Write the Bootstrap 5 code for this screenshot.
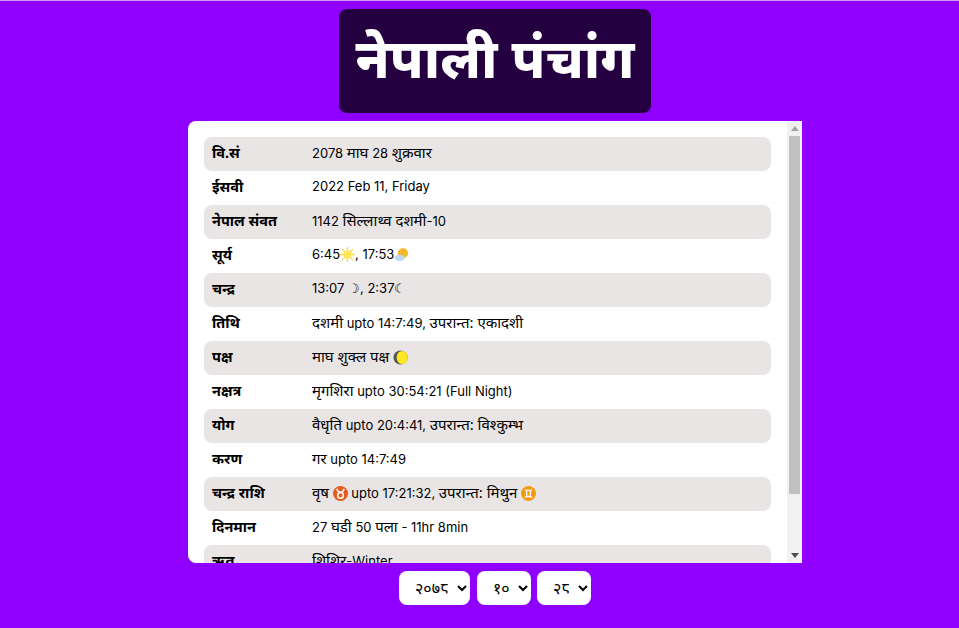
<!DOCTYPE html>
<html lang="ne">
<head>
<meta charset="utf-8">
<title>नेपाली पंचांग</title>
<link href="https://cdn.jsdelivr.net/npm/bootstrap@5.3.0/dist/css/bootstrap.min.css" rel="stylesheet">
<style>
html,body{height:100%;}
body{background:#8f00ff;border-top:1px solid #c9a0ef;font-family:"Inter","Noto Sans",sans-serif;color:#000;overflow:hidden;font-size:13px;}
.pagewrap{padding-left:31px;}
.titlebox{background:#240040;color:#fff;border-radius:8px;width:312px;height:104px;margin-top:8px;font-size:54px;font-weight:800;line-height:96px;text-align:center;font-family:"Noto Sans",sans-serif;}
.panelwrap{width:614px;height:442px;margin-top:8px;}
.panel{background:#fff;flex:1 1 auto;min-width:0;border-radius:8px 0 0 8px;overflow:hidden;padding:16px;}
.fakebar{width:15px;flex:none;background:#f1f1f1;}
.barbtn{height:15px;}
.arrow{width:0;height:0;border-left:4.5px solid transparent;border-right:4.5px solid transparent;}
.arrow-up{border-bottom:5px solid #a3a3a3;}
.arrow-down{border-top:5px solid #505050;}
.barthumb{width:11px;height:358px;background:#c1c1c1;}
.prow{display:flex;height:34px;align-items:center;border-radius:8px;padding:0 8px 3px;}
.prow:nth-child(odd){background:#e9e5e5;}
.plabel{width:100px;font-weight:700;font-size:14.5px;flex:none;font-family:"Noto Sans",sans-serif;}
.dv{font-size:15px;font-family:"Noto Sans",sans-serif;}
.ico{display:inline-block;vertical-align:-3px;width:15px;height:15px;}
.pick{margin-top:8px;gap:6px;}
.pick select{background:#fff;border:0;border-radius:8px;height:34px;padding:0 0 0 12px;font-size:16px;font-family:"Noto Sans",sans-serif;}
.yr{width:71px}.mo{width:54px;margin-left:1px}.dy{width:54px}
</style>
</head>
<body>
<div class="d-flex flex-column align-items-center pagewrap">
  <div class="titlebox">नेपाली पंचांग</div>
  <div class="d-flex panelwrap">
  <div class="panel">
    <div class="prow"><div class="plabel">वि.सं</div><div>2078 <span class="dv">माघ</span> 28 <span class="dv">शुक्रवार</span></div></div>
    <div class="prow"><div class="plabel">ईसवी</div><div>2022 Feb 11, Friday</div></div>
    <div class="prow"><div class="plabel">नेपाल संवत</div><div>1142 <span class="dv">सिल्लाथ्व दशमी</span>-10</div></div>
    <div class="prow"><div class="plabel">सूर्य</div><div>6:45<svg class="ico" viewBox="0 0 16 16"><g stroke="#ffd83a" stroke-width="1.400"><path d="M8 0v16M0 8h16M2.300 2.300l11.400 11.400M13.700 2.300 2.300 13.700"/></g><circle cx="8" cy="8" r="4.400" fill="#ffe45c"/></svg>, 17:53<svg class="ico" viewBox="0 0 16 16"><circle cx="9.500" cy="6.500" r="5.500" fill="#f5b82e"/><ellipse cx="6" cy="11.500" rx="5.500" ry="3.200" fill="#bcd9f2"/></svg></div></div>
    <div class="prow"><div class="plabel">चन्द्र</div><div>13:07 ☽, 2:37☾</div></div>
    <div class="prow"><div class="plabel">तिथि</div><div><span class="dv">दशमी</span> upto 14:7:49, <span class="dv">उपरान्त: एकादशी</span></div></div>
    <div class="prow"><div class="plabel">पक्ष</div><div><span class="dv">माघ शुक्ल पक्ष</span> <svg class="ico" viewBox="0 0 16 16"><circle cx="8" cy="8" r="7.500" fill="#555"/><ellipse cx="9.700" cy="8" rx="5.800" ry="7" fill="#ffe81f"/></svg></div></div>
    <div class="prow"><div class="plabel">नक्षत्र</div><div><span class="dv">मृगशिरा</span> upto 30:54:21 (Full Night)</div></div>
    <div class="prow"><div class="plabel">योग</div><div><span class="dv">वैधृति</span> upto 20:4:41, <span class="dv">उपरान्त: विश्कुम्भ</span></div></div>
    <div class="prow"><div class="plabel">करण</div><div><span class="dv">गर</span> upto 14:7:49</div></div>
    <div class="prow"><div class="plabel">चन्द्र राशि</div><div><span class="dv">वृष</span> <svg class="ico" viewBox="0 0 16 16"><circle cx="8" cy="8" r="8" fill="#e8591c"/><circle cx="8" cy="10" r="3" fill="none" stroke="#fff" stroke-width="1.600"/><path d="M4 3c1 3 2.500 4 4 4s3-1 4-4" fill="none" stroke="#fff" stroke-width="1.600"/></svg> upto 17:21:32, <span class="dv">उपरान्त: मिथुन</span> <svg class="ico" viewBox="0 0 16 16"><circle cx="8" cy="8" r="8" fill="#f29a0e"/><path d="M4 4c2.500 1 5.500 1 8 0M4 12c2.500-1 5.500-1 8 0M6 5v6M10 5v6" fill="none" stroke="#fff" stroke-width="1.400"/></svg></div></div>
    <div class="prow"><div class="plabel">दिनमान</div><div>27 <span class="dv">घडी</span> 50 <span class="dv">पला</span> - 11hr 8min</div></div>
    <div class="prow"><div class="plabel">ऋतु</div><div><span class="dv">शिशिर</span>-Winter</div></div>
    <div class="prow"><div class="plabel">अयन</div><div><span class="dv">उत्तरायण</span></div></div>
  </div>
  <div class="fakebar d-flex flex-column align-items-center">
    <div class="barbtn d-flex align-items-center"><div class="arrow arrow-up"></div></div>
    <div class="barthumb"></div>
    <div class="barbtn d-flex align-items-center mt-auto"><div class="arrow arrow-down"></div></div>
  </div>
  </div>
  <div class="d-flex pick">
    <select class="yr"><option>२०७८</option></select>
    <select class="mo"><option>१०</option></select>
    <select class="dy"><option>२८</option></select>
  </div>
</div>
</body>
</html>
